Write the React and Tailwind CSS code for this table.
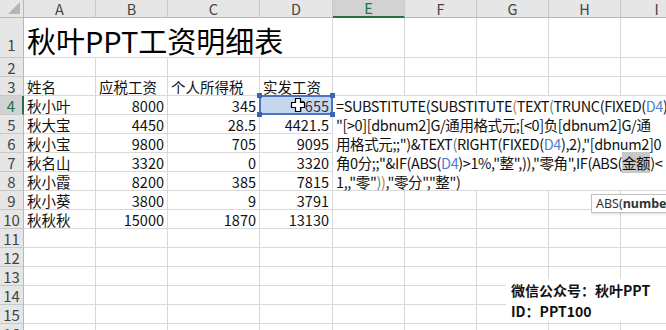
import React from "react";

const FONT = { fontFamily: '"Noto Sans CJK SC", "Noto Sans", sans-serif' };

const P2 = "text-[#c47b2b]";
const P3 = "text-[#3d8c99]";
const REF = "text-[#4f7fd0]";

function HeaderCell({ children, selected }) {
  return (
    <div
      className={
        "flex items-center justify-center text-[14.5px] leading-[16px] border-r border-[#c8c8c8] " +
        (selected
          ? "bg-[#d2d2d2] text-[#217346] border-b-2 border-b-[#217346]"
          : "bg-[#e6e6e6] text-[#444] border-b border-b-[#b8b8b8]")
      }
    >
      {children}
    </div>
  );
}

function RowHead({ n, selected, tall }) {
  return (
    <div
      className={
        "flex justify-center text-[15px] leading-[17px] border-b border-[#c8c8c8] " +
        (tall ? "items-end pb-[4px] " : "items-center ") +
        (selected
          ? "bg-[#d2d2d2] text-[#217346] border-r-2 border-r-[#217346]"
          : "bg-[#e6e6e6] text-[#444] border-r border-r-[#b8b8b8]")
      }
    >
      {n}
    </div>
  );
}

function Cell({ children, right, className = "" }) {
  return (
    <div
      className={
        "flex items-center whitespace-nowrap overflow-visible px-[3px] pt-[1px] text-[14.5px] leading-[17px] text-[#111] border-r border-b border-[#d9d9d9] " +
        (right ? "justify-end " : "") +
        className
      }
    >
      {children}
    </div>
  );
}

function Empty({ n }) {
  return Array.from({ length: n }).map((_, i) => <Cell key={i} />);
}

const data = [
  ["秋小叶", "8000", "345", "7655"],
  ["秋大宝", "4450", "28.5", "4421.5"],
  ["秋小宝", "9800", "705", "9095"],
  ["秋名山", "3320", "0", "3320"],
  ["秋小霞", "8200", "385", "7815"],
  ["秋小葵", "3800", "9", "3791"],
  ["秋秋秋", "15000", "1870", "13130"],
];

function Handle({ className }) {
  return <div className={"absolute w-[5px] h-[5px] bg-[#3b64b3] " + className} />;
}

function Cursor() {
  return (
    <svg
      width="16"
      height="16"
      viewBox="0 0 16 16"
      className="absolute left-[30px] top-[1px]"
    >
      <path
        d="M5.5 1.5h5v4h4v5h-4v4h-5v-4h-4v-5h4z"
        fill="#fff"
        stroke="#000"
        strokeWidth="1.2"
        strokeLinejoin="miter"
      />
    </svg>
  );
}

export default function App() {
  return (
    <div className="relative w-[666px] h-[330px] overflow-hidden bg-white" style={FONT}>
      <div className="grid grid-cols-[24px_72px_72px_92px_73px_72px_72px_72px_72px_72px] grid-rows-[18px_40px_repeat(15,19px)]">
        {/* title, explicitly placed */}
        <div className="col-start-2 col-span-4 row-start-2 flex items-end pl-[3px] pb-0 text-[29px] leading-[33px] text-black border-r border-b border-[#d9d9d9] whitespace-nowrap">
          秋叶PPT工资明细表
        </div>
        {/* formula edit area, explicitly placed over E4:I8 */}
        <div className="col-start-6 col-span-5 row-start-5 row-span-5 bg-white border-b border-[#d9d9d9] pl-[3px] text-[14.5px] leading-[19px] tracking-[-0.4px] text-[#111]">
          <div className="whitespace-nowrap">
            =SUBSTITUTE(SUBSTITUTE<span className={P2}>(</span>TEXT<span className={P3}>(</span>TRUNC(FIXED(<span className={REF}>D4</span>)
          </div>
          <div className="whitespace-nowrap">"[&gt;0][dbnum2]G/通用格式元;[&lt;0]负[dbnum2]G/通</div>
          <div className="whitespace-nowrap">
            用格式元;;")&amp;TEXT<span className={P3}>(</span>RIGHT(FIXED(<span className={REF}>D4</span>),2),"[dbnum2]0
          </div>
          <div className="whitespace-nowrap">
            角0分;;"&amp;IF(ABS(<span className={REF}>D4</span>)&gt;1%,"整",)),"零角",IF(ABS(
            <span className="bg-[#c8c8c8]">金额</span>)&lt;
          </div>
          <div className="whitespace-nowrap">
            1,,"零"<span className={P3}>)</span><span className={P2}>)</span>,"零分","整")
          </div>
        </div>

        {/* column headers */}
        <div className="relative bg-[#e6e6e6] border-r border-b border-[#b8b8b8]">
          <svg width="12" height="12" viewBox="0 0 12 12" className="absolute right-[3px] bottom-[3px]">
            <path d="M12 0V12H0Z" fill="#b5b5b5" />
          </svg>
        </div>
        {["A", "B", "C", "D", "E", "F", "G", "H", "I"].map((c) => (
          <HeaderCell key={c} selected={c === "E"}>
            {c}
          </HeaderCell>
        ))}

        {/* row 1 */}
        <RowHead n={1} tall />
        <Empty n={5} />

        {/* row 2 */}
        <RowHead n={2} />
        <Empty n={9} />

        {/* row 3 */}
        <RowHead n={3} />
        <Cell>姓名</Cell>
        <Cell>应税工资</Cell>
        <Cell>个人所得税</Cell>
        <Cell>实发工资</Cell>
        <Empty n={5} />

        {/* data rows */}
        {data.map((r, i) => {
          const n = i + 4;
          const covered = n >= 4 && n <= 8;
          return (
            <React.Fragment key={n}>
              <RowHead n={n} selected={n === 4} />
              <Cell>{r[0]}</Cell>
              <Cell right>{r[1]}</Cell>
              <Cell right>{r[2]}</Cell>
              {n === 4 ? (
                <Cell right className="relative bg-[#c6d6ef] !text-[#333]">
                  {r[3]}
                  <div className="absolute -left-[1px] -top-[1px] right-[-1px] bottom-[-1px] border-2 border-[#4a74c2]" />
                  <Handle className="-left-[3px] -top-[3px]" />
                  <Handle className="-right-[3px] -top-[3px]" />
                  <Handle className="-left-[3px] -bottom-[3px]" />
                  <Handle className="-right-[3px] -bottom-[3px]" />
                  <Cursor />
                </Cell>
              ) : (
                <Cell right>{r[3]}</Cell>
              )}
              {!covered && <Empty n={5} />}
            </React.Fragment>
          );
        })}

        {[11, 12, 13, 14, 15, 16].map((n) => (
          <React.Fragment key={n}>
            <RowHead n={n} />
            <Empty n={9} />
          </React.Fragment>
        ))}
      </div>

      {/* function tooltip */}
      <div className="absolute left-[591px] top-[194px] h-[19px] w-[100px] bg-white border border-[#c2c2c2] shadow-[1px_1px_2px_rgba(0,0,0,0.15)] pl-[4px] text-[12.5px] leading-[17px] text-[#333] whitespace-nowrap" style={{ fontFamily: '"Noto Sans", sans-serif' }}>
        ABS(<span className="font-bold">number</span>)
      </div>

      {/* floating text box watermark */}
      <div className="absolute left-[506px] top-[279px] w-[160px] h-[42px] bg-white pl-[5px] pt-[1px] text-[14px] leading-[21px] font-bold text-[#111] whitespace-nowrap">
        <div>微信公众号：秋叶PPT</div>
        <div>ID：PPT100</div>
      </div>
    </div>
  );
}
